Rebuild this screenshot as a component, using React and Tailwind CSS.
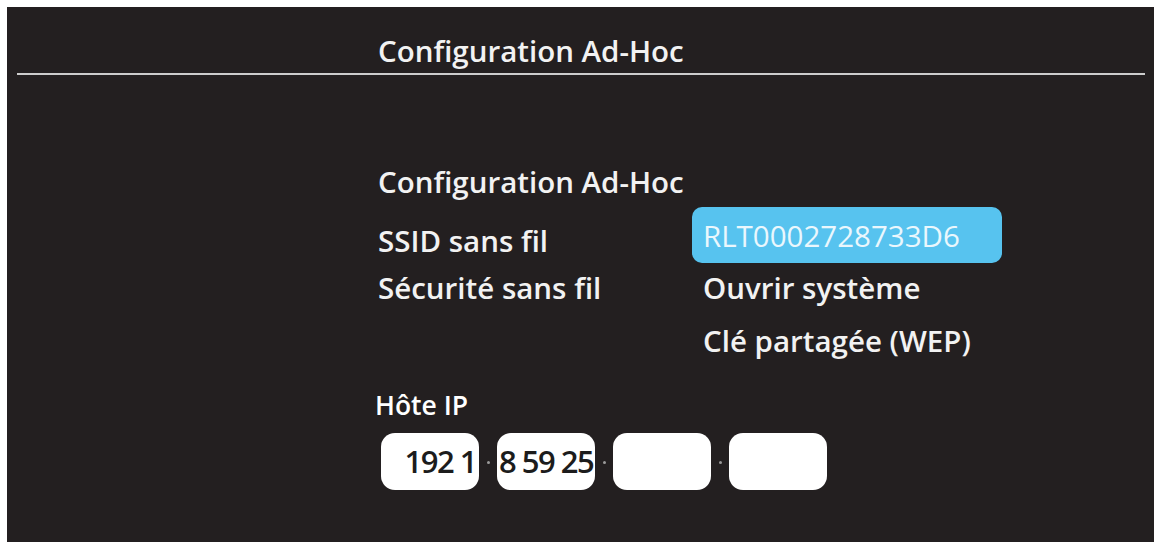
const labelFont = { fontFamily: '"Open Sans", "Noto Sans", sans-serif' };

function IpBox({ children, align = "center" }) {
  const justify =
    align === "end" ? "justify-end pr-[3px]" : align === "start" ? "justify-start pl-[2px]" : "justify-center";
  return (
    <div
      className={`flex h-[57px] w-[98px] items-center overflow-visible whitespace-pre rounded-[14px] bg-white text-[31px] leading-none tracking-[-1.5px] text-[#1c1c1c] ${justify}`}
    >
      {children}
    </div>
  );
}

function Dot() {
  return (
    <div className="flex w-[18px] items-center justify-center">
      <div className="mt-[2px] h-[3px] w-[3px] rounded-full bg-[#9a9a9a]" />
    </div>
  );
}

export default function App() {
  return (
    <div className="h-[542px] w-[1154px] overflow-hidden bg-white pl-[7px] pt-[7px]" style={labelFont}>
      <div className="flex h-full flex-col bg-[#231f20] text-[#f2f2f2]">
        {/* header */}
        <div className="pl-[371px] pt-[26px] text-[29.5px] font-semibold leading-[36px]">
          Configuration Ad-Hoc
        </div>
        <div className="ml-[10px] mr-[9px] mt-[4px] h-[2px] bg-[#cdcdcd]" />

        {/* settings */}
        <div className="mt-[82px] pl-[371px] text-[29.5px] font-semibold leading-[36px]">
          <div className="flex h-[50px] items-center">Configuration Ad-Hoc</div>

          <div className="grid h-[56px] grid-cols-[314px_310px]">
            <div className="pt-[16px]">SSID sans fil</div>
            <div className="flex items-center rounded-[10px] bg-[#57c3ef] pl-[11px] pt-[2px] font-normal text-[#eaf7fd]">
              RLT0002728733D6
            </div>
          </div>

          <div className="grid h-[50px] grid-cols-[314px_auto] items-center">
            <div>Sécurité sans fil</div>
            <div className="pl-[11px]">Ouvrir système</div>
          </div>

          <div className="grid h-[56px] grid-cols-[314px_auto] items-center">
            <div />
            <div className="pl-[11px]">Clé partagée (WEP)</div>
          </div>

          <div className="-ml-[3px] mt-[16px] flex h-[40px] items-center text-[26.5px] font-semibold text-white">
            Hôte IP
          </div>

          <div className="ml-[3px] mt-[8px] flex">
            <IpBox align="end">192 1</IpBox>
            <Dot />
            <IpBox align="start">8 59 25</IpBox>
            <Dot />
            <IpBox />
            <Dot />
            <IpBox />
          </div>
        </div>
      </div>
    </div>
  );
}
